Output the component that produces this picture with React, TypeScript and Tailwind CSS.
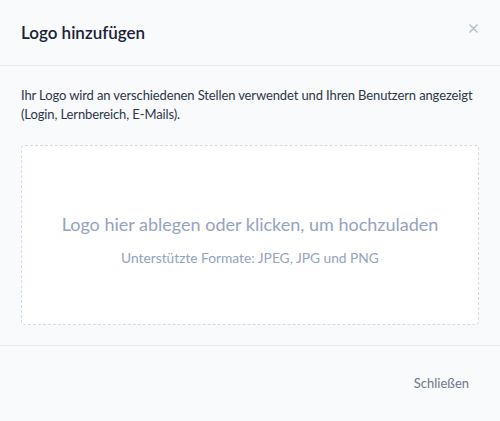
export default function App() {
  return (
    <div
      className="w-[500px] h-[421px] bg-[#f8fafc] text-[#1a202c] flex flex-col"
      style={{ fontFamily: 'Lato, "Noto Sans", sans-serif' }}
    >
      {/* Kopfzeile */}
      <div className="h-[66px] pl-[21px] pr-[22px] flex items-center justify-between border-b border-[#e6eaf0]">
        <h2 className="text-[17px] font-semibold text-[#1a2238]">Logo hinzufügen</h2>
        <button className="text-[#b8c2cf] mt-[-8px]">
          <svg width="9" height="9" viewBox="0 0 9 9" fill="none" stroke="currentColor" strokeWidth="1.6" strokeLinecap="round">
            <path d="M1 1l7 7M8 1l-7 7" />
          </svg>
        </button>
      </div>

      {/* Inhalt */}
      <div className="px-[21px] pt-[20px] pb-[20px] border-b border-[#e6eaf0]">
        <p className="text-[13px] leading-[19px] text-[#2d3748] tracking-[-0.12px]">
          Ihr Logo wird an verschiedenen Stellen verwendet und Ihren Benutzern angezeigt (Login, Lernbereich, E-Mails).
        </p>
        <div className="mt-[21px] h-[180px] bg-white border border-dashed border-[#d5dbe4] rounded-[4px] flex flex-col items-center justify-center">
          <p className="text-[18px] text-[#94a3bf] mt-[10px]">Logo hier ablegen oder klicken, um hochzuladen</p>
          <p className="text-[13.75px] text-[#94a3bf] mt-[10px]">Unterstützte Formate: JPEG, JPG und PNG</p>
        </div>
      </div>

      {/* Fußzeile */}
      <div className="flex-1 flex items-center justify-end px-[31px]">
        <button className="text-[13px] text-[#6b7689]">Schließen</button>
      </div>
    </div>
  );
}
